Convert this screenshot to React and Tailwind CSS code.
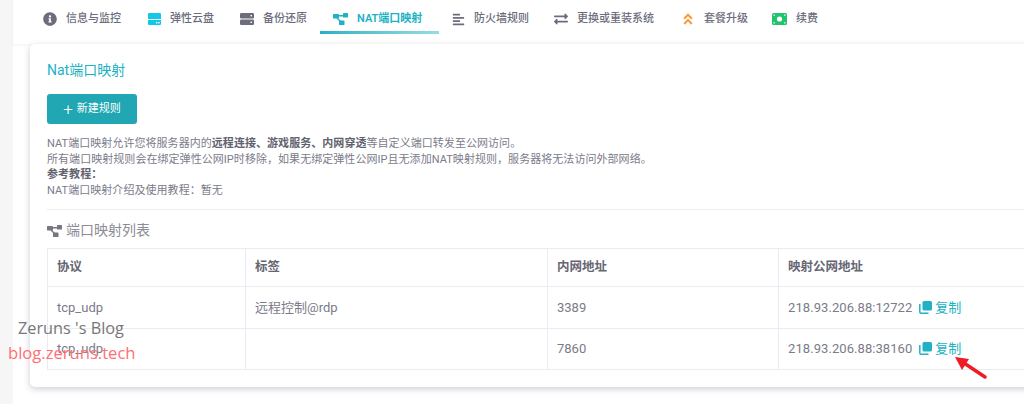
import { FaInfoCircle, FaAlignLeft, FaExchangeAlt, FaAngleDoubleUp } from "react-icons/fa";

function DiskIcon({ className }) {
  return (
    <svg width="13" height="12" viewBox="0 0 13 12" className={className}>
      <path d="M1 0h11a1 1 0 0 1 1 1v5H0V1a1 1 0 0 1 1-1z" fill="currentColor" />
      <path d="M0 7h13v4a1 1 0 0 1-1 1H1a1 1 0 0 1-1-1z" fill="currentColor" />
      <rect x="8" y="9" width="1.4" height="1.4" fill="#fff" />
      <rect x="10.2" y="9" width="1.4" height="1.4" fill="#fff" />
    </svg>
  );
}

function ServerIcon({ className }) {
  return (
    <svg width="14" height="12" viewBox="0 0 14 12" className={className}>
      <rect x="0" y="0" width="14" height="5.4" rx="1.2" fill="currentColor" />
      <rect x="0" y="6.6" width="14" height="5.4" rx="1.2" fill="currentColor" />
      <rect x="10.5" y="2" width="1.5" height="1.4" fill="#fff" />
      <rect x="10.5" y="8.6" width="1.5" height="1.4" fill="#fff" />
    </svg>
  );
}

function NatIcon({ className }) {
  return (
    <svg width="15" height="12" viewBox="0 0 15 12" className={className}>
      <rect x="0" y="1" width="6" height="4.5" rx="0.6" fill="currentColor" />
      <rect x="10" y="0" width="5" height="4.5" rx="0.6" fill="currentColor" />
      <rect x="6" y="7.5" width="5.5" height="4.5" rx="0.6" fill="currentColor" />
      <path d="M5 2.8h6M4 5l4 4" stroke="currentColor" strokeWidth="1.4" fill="none" />
    </svg>
  );
}

function MoneyIcon({ className }) {
  return (
    <svg width="15" height="12" viewBox="0 0 15 12" className={className}>
      <rect x="0" y="0" width="15" height="12" rx="1.5" fill="currentColor" />
      <circle cx="7.5" cy="6" r="2.6" fill="#fff" />
      <rect x="1.5" y="1.5" width="1.3" height="1.3" fill="#fff" />
      <rect x="12.2" y="1.5" width="1.3" height="1.3" fill="#fff" />
      <rect x="1.5" y="9.2" width="1.3" height="1.3" fill="#fff" />
      <rect x="12.2" y="9.2" width="1.3" height="1.3" fill="#fff" />
    </svg>
  );
}

const tabs = [
  { label: "信息与监控", icon: FaInfoCircle, iconClass: "text-[14px] text-[#6c6c7c]", w: "w-[105px]" },
  { label: "弹性云盘", icon: DiskIcon, iconClass: "text-[#0fc9e7]", w: "w-[92px]" },
  { label: "备份还原", icon: ServerIcon, iconClass: "text-[#6c6c7c]", w: "w-[80px]" },
  { label: "NAT端口映射", icon: NatIcon, iconClass: "text-[#20b2c4]", w: "w-[132px] pl-[13px]", active: true },
  { label: "防火墙规则", icon: FaAlignLeft, iconClass: "text-[13px] text-[#6c6c7c]", w: "w-[102px]" },
  { label: "更换或重装系统", icon: FaExchangeAlt, iconClass: "text-[14px] text-[#6c6c7c]", w: "w-[127px]" },
  { label: "套餐升级", icon: FaAngleDoubleUp, iconClass: "text-[14px] text-[#fd9a3c]", w: "w-[91px]" },
  { label: "续费", icon: MoneyIcon, iconClass: "text-[#22c36f]", w: "w-[60px]" },
];

const rows = [
  { proto: "tcp_udp", tag: "远程控制@rdp", inner: "3389", addr: "218.93.206.88:12722" },
  { proto: "tcp_udp", tag: "", inner: "7860", addr: "218.93.206.88:38160" },
];

function CopyIcon() {
  return (
    <svg width="13" height="13" viewBox="0 0 13 13" className="shrink-0 text-[#20b2c4]">
      <rect x="3.5" y="0" width="9.5" height="9.5" rx="1.5" fill="currentColor" />
      <path d="M0.8 3v8a1.2 1.2 0 0 0 1.2 1.2h7.5" fill="none" stroke="currentColor" strokeWidth="1.5" />
    </svg>
  );
}

export default function App() {
  return (
    <div className="relative h-[404px] w-[1024px] overflow-hidden bg-[#f6f6f6] font-['Roboto','Noto_Sans_CJK_SC',sans-serif]">
      <div className="ml-[13px] h-full bg-white">
        {/* tabs */}
        <div className="flex h-[44px] items-start pl-[30px] shadow-[0_1px_3px_rgba(0,0,0,0.06)]">
          {tabs.map((tab) => {
            const Icon = tab.icon;
            return (
              <div key={tab.label} className={`relative flex h-[34px] shrink-0 items-center pt-[4px] ${tab.w}`}>
                <Icon className={`mr-[9px] shrink-0 ${tab.iconClass}`} />
                <span className={`whitespace-nowrap text-[11px] font-medium ${tab.active ? "font-semibold text-[#20b2c4]" : "text-[#6c6c7c]"}`}>{tab.label}</span>
                {tab.active && (
                  <div className="absolute bottom-0 left-0 h-[3px] w-[119px] bg-gradient-to-r from-[#20b2c4] to-[#95dce3]" />
                )}
              </div>
            );
          })}
        </div>

        {/* card */}
        <div className="ml-[17px] w-[1040px] rounded-[5px] bg-white pb-[17px] pl-[17px] pt-[17px] shadow-[0_2px_6px_rgba(60,60,90,0.25)]">
          <h2 className="text-[14px] leading-[18px] text-[#20b2c4]">Nat端口映射</h2>
          <button className="mt-[15px] flex h-[30px] w-[90px] items-center justify-center gap-[4px] rounded-[3px] bg-[#20a7b3] text-[11px] text-white">
            <span className="text-[17px] font-light leading-none">+</span>
            新建规则
          </button>
          <div className="mt-[12px] text-[11px] leading-[15.7px] tracking-[0.05px] text-[#7b7b8a]">
            <p>NAT端口映射允许您将服务器内的<b className="font-semibold text-[#62626e]">远程连接、游戏服务、内网穿透</b>等自定义端口转发至公网访问。</p>
            <p>所有端口映射规则会在绑定弹性公网IP时移除，如果无绑定弹性公网IP且无添加NAT映射规则，服务器将无法访问外部网络。</p>
            <p className="font-semibold text-[#62626e]">参考教程：</p>
            <p>NAT端口映射介绍及使用教程：暂无</p>
          </div>
          <div className="mt-[10px] border-t border-[#ececf1]" />
          <div className="mt-[11px] flex h-[20px] items-center gap-[4px] text-[14px] text-[#8c8c96]">
            <NatIcon className="text-[#777782]" />
            端口映射列表
          </div>
          <table className="mt-[7px] w-[1000px] table-fixed border-collapse text-[13px] text-[#7b7b8a]">
            <thead>
              <tr className="h-[38px] text-[12.5px] text-[#666672]">
                <th className="w-[198px] border border-[#ebebf3] pl-[9px] text-left font-semibold">协议</th>
                <th className="w-[302px] border border-[#ebebf3] pl-[9px] text-left font-semibold">标签</th>
                <th className="w-[231px] border border-[#ebebf3] pl-[9px] text-left font-semibold">内网地址</th>
                <th className="border border-[#ebebf3] pl-[9px] text-left font-semibold">映射公网地址</th>
              </tr>
            </thead>
            <tbody>
              {rows.map((row, i) => (
                <tr key={row.addr} className={i === 0 ? "h-[42px]" : "h-[41px]"}>
                  <td className="border border-[#ebebf3] pl-[9px]">{row.proto}</td>
                  <td className="border border-[#ebebf3] pl-[9px]">{row.tag}</td>
                  <td className="border border-[#ebebf3] pl-[9px]">{row.inner}</td>
                  <td className="border border-[#ebebf3] pl-[9px]">
                    <div className="flex items-center">
                      <span className="tracking-[0.07px]">{row.addr}</span>
                      <span className="ml-[7px] mr-[3px]"><CopyIcon /></span>
                      <span className="text-[#20b2c4]">复制</span>
                    </div>
                  </td>
                </tr>
              ))}
            </tbody>
          </table>
        </div>
      </div>

      {/* watermark */}
      <div className="absolute left-[18px] top-[317px] font-['Open_Sans',sans-serif] text-[16.3px] leading-[22px] text-[#777777]">Zeruns 's Blog</div>
      <div className="absolute left-[8px] top-[342px] font-['Open_Sans',sans-serif] text-[16.6px] leading-[22px] text-[#ff6f75]">blog.zeruns.tech</div>

      {/* red arrow */}
      <svg className="absolute left-[950px] top-[350px]" width="40" height="32" viewBox="0 0 40 32">
        <path d="M35 27 L14 13" stroke="#ee1c25" strokeWidth="3.5" strokeLinecap="round" />
        <path d="M5 7 L19 9 L12 20 Z" fill="#ee1c25" />
      </svg>
    </div>
  );
}
